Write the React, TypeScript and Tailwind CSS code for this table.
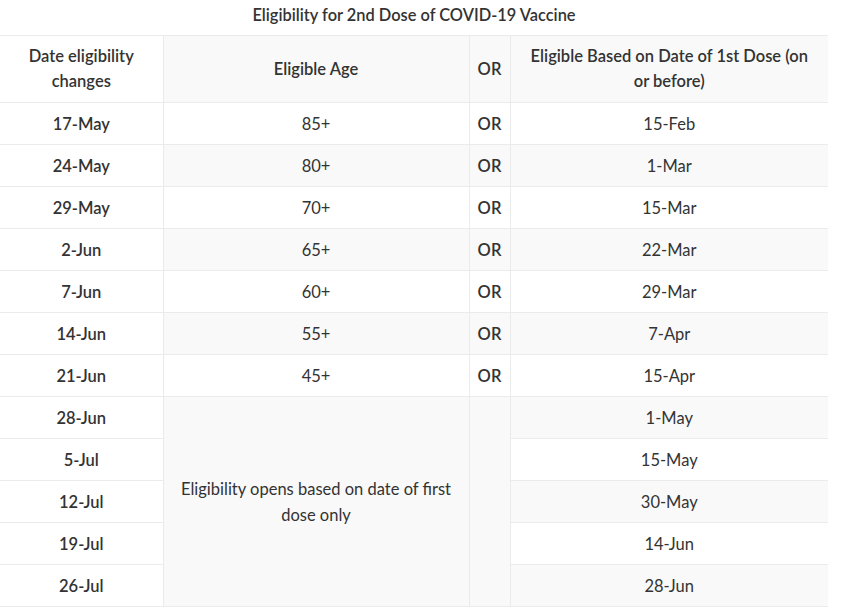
const rows: { date: string; age?: string; first: string }[] = [
  { date: "17-May", age: "85+", first: "15-Feb" },
  { date: "24-May", age: "80+", first: "1-Mar" },
  { date: "29-May", age: "70+", first: "15-Mar" },
  { date: "2-Jun", age: "65+", first: "22-Mar" },
  { date: "7-Jun", age: "60+", first: "29-Mar" },
  { date: "14-Jun", age: "55+", first: "7-Apr" },
  { date: "21-Jun", age: "45+", first: "15-Apr" },
  { date: "28-Jun", first: "1-May" },
  { date: "5-Jul", first: "15-May" },
  { date: "12-Jul", first: "30-May" },
  { date: "19-Jul", first: "14-Jun" },
  { date: "26-Jul", first: "28-Jun" },
];

const cell = "border border-[#ebebeb] text-center align-middle px-2";

const App = () => {
  return (
    <div className="bg-white w-[857px] h-[612px] text-[#333] text-[16.5px] font-['Lato','Open_Sans',sans-serif]">
      <table className="w-[828px] table-fixed border-collapse">
        <caption className="h-[35px] leading-[29px] font-semibold text-[16.4px] text-[#333]">
          Eligibility for 2nd Dose of COVID-19 Vaccine
        </caption>
        <colgroup>
          <col className="w-[163px]" />
          <col className="w-[306px]" />
          <col className="w-[41px]" />
          <col className="w-[318px]" />
        </colgroup>
        <thead>
          <tr className="h-[67px] leading-[25px]">
            <th className={`${cell} border-l-0 bg-white font-semibold`}>Date eligibility changes</th>
            <th className={`${cell} bg-[#f9f9f9] font-semibold`}>Eligible Age</th>
            <th className={`${cell} bg-[#f9f9f9] font-semibold px-0`}>OR</th>
            <th className={`${cell} border-r-0 bg-[#f9f9f9] font-semibold px-[14px]`}>
              Eligible Based on Date of 1st Dose (on or before)
            </th>
          </tr>
        </thead>
        <tbody>
          {rows.map((r, i) => {
            const shade = i % 2 === 1 ? "bg-[#f9f9f9]" : "bg-white";
            return (
              <tr key={r.date} className="h-[42px] leading-[20px]">
                <th className={`${cell} border-l-0 bg-white font-semibold`}>{r.date}</th>
                {r.age ? (
                  <>
                    <td className={`${cell} ${shade}`}>{r.age}</td>
                    <td className={`${cell} ${shade} font-semibold px-0`}>OR</td>
                  </>
                ) : i === 7 ? (
                  <>
                    <td rowSpan={5} className={`${cell} bg-[#f9f9f9] leading-[26px] px-4`}>
                      Eligibility opens based on date of first dose only
                    </td>
                    <td rowSpan={5} className={`${cell} bg-[#f9f9f9]`}></td>
                  </>
                ) : null}
                <td className={`${cell} border-r-0 ${shade}`}>{r.first}</td>
              </tr>
            );
          })}
        </tbody>
      </table>
    </div>
  );
};

export default App;
